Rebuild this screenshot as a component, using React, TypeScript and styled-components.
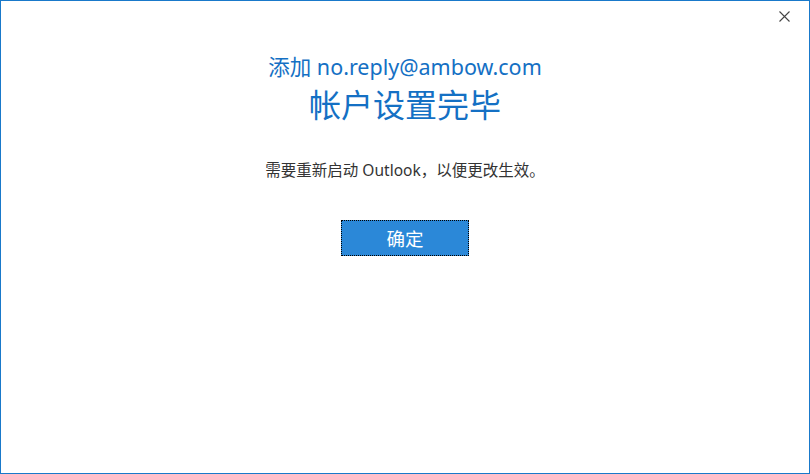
import React from "react";
import styled, { createGlobalStyle } from "styled-components";

const Global = createGlobalStyle`
  html, body { margin: 0; padding: 0; background: #fff; }
  body { font-family: "Segoe UI", "Open Sans", "Noto Sans CJK SC", sans-serif; }
`;

const Window = styled.div`
  position: relative;
  box-sizing: border-box;
  width: 810px;
  height: 474px;
  border: 1px solid #1979ca;
  background: #fff;
  display: flex;
  flex-direction: column;
  align-items: center;
  padding-top: 51px;
`;

const CloseButton = styled.button`
  position: absolute;
  top: 9px;
  right: 18px;
  width: 13px;
  height: 13px;
  padding: 0;
  border: 0;
  background: transparent;
  display: flex;
  align-items: center;
  justify-content: center;
`;

const Subtitle = styled.div`
  font-family: "Noto Sans", "Noto Sans CJK SC", sans-serif;
  font-size: 21.5px;
  line-height: 30px;
  color: #1470c4;
`;

const Title = styled.div`
  font-family: "Noto Sans CJK SC", sans-serif;
  font-size: 32px;
  line-height: 40px;
  color: #1470c4;
  margin-top: 1px;
`;

const Message = styled.div`
  font-family: "Noto Sans", "Noto Sans CJK SC", sans-serif;
  font-size: 15.5px;
  line-height: 20px;
  color: #333;
  margin-top: 37px;
`;

const OkButton = styled.button`
  margin-top: 40px;
  box-sizing: border-box;
  width: 128px;
  height: 36px;
  background: #2b88d8;
  border: 1px dotted #000;
  color: #fff;
  font-family: "Noto Sans CJK SC", sans-serif;
  font-size: 18.5px;
  padding: 0;
  display: flex;
  align-items: center;
  justify-content: center;
`;

export default function App() {
  return (
    <>
      <Global />
      <Window>
        <CloseButton aria-label="关闭">
          <svg width="11" height="11" viewBox="0 0 11 11">
            <path d="M0.5 0.5 L10.5 10.5 M10.5 0.5 L0.5 10.5" stroke="#444" strokeWidth="1.1" />
          </svg>
        </CloseButton>
        <Subtitle>添加 no.reply@ambow.com</Subtitle>
        <Title>帐户设置完毕</Title>
        <Message>需要重新启动 Outlook，以便更改生效。</Message>
        <OkButton>确定</OkButton>
      </Window>
    </>
  );
}
